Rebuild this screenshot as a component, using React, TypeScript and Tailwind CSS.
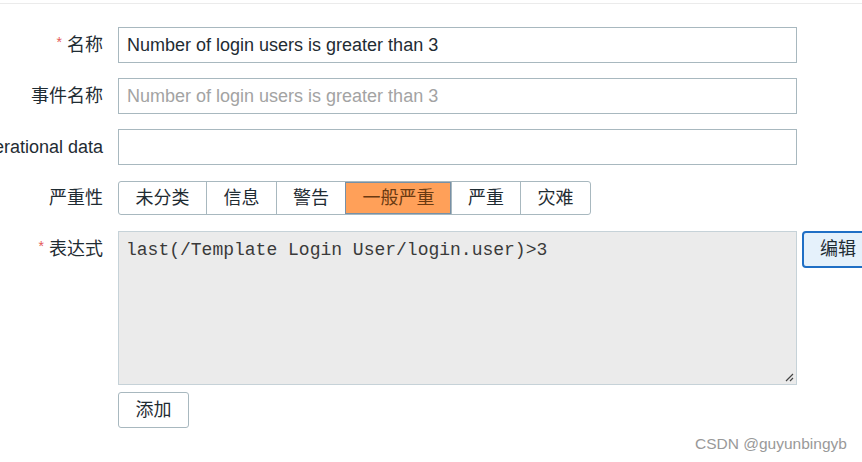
import React from 'react';

const levels = [
  { name: '未分类', w: 'w-[87px]' },
  { name: '信息', w: 'w-[70px]' },
  { name: '警告', w: 'w-[69px]' },
  { name: '一般严重', w: 'w-[106px]', active: true },
  { name: '严重', w: 'w-[69px]' },
  { name: '灾难', w: 'w-[70px]' },
];

function Label({ text, required }: { text: string; required?: boolean }) {
  return (
    <div className="w-[103px] shrink-0 flex justify-end items-center h-[36px] whitespace-nowrap text-[18px] text-[#1f2c33]">
      {required && <span className="text-[#e45959] text-[14px] mr-[5px] -mt-[5px]">*</span>}
      <span>{text}</span>
    </div>
  );
}

export default function App() {
  return (
    <div
      className="w-[862px] h-[462px] bg-white relative overflow-hidden"
      style={{ fontFamily: '"Liberation Sans", "Noto Sans CJK SC", sans-serif' }}
    >
      <div className="pt-[3px]">
        <div className="h-px bg-[#ebebeb]" />
      </div>

      <div className="pt-[23px] flex flex-col">
        <div className="flex items-start">
          <Label text="名称" required />
          <div className="ml-[15px] w-[679px] shrink-0 h-[36px] border border-[#a8b8bf] flex items-center px-[8px] text-[18px] text-[#1f2c33]">
            Number of login users is greater than 3
          </div>
        </div>

        <div className="flex items-start mt-[15px]">
          <Label text="事件名称" />
          <div className="ml-[15px] w-[679px] shrink-0 h-[36px] border border-[#a8b8bf] flex items-center px-[8px] text-[18px] text-[#a3a3a3]">
            Number of login users is greater than 3
          </div>
        </div>

        <div className="flex items-start mt-[15px]">
          <Label text="Operational data" />
          <div className="ml-[15px] w-[679px] shrink-0 h-[36px] border border-[#a8b8bf]" />
        </div>

        <div className="flex items-start mt-[16px]">
          <div className="w-[103px] shrink-0 flex justify-end items-center h-[34px] text-[18px] text-[#1f2c33]">严重性</div>
          <div className="ml-[15px] flex h-[34px] border border-[#a8b8bf] rounded-[3px] overflow-hidden">
            {levels.map((l, i) => (
              <div
                key={l.name}
                className={`${l.w} flex items-center justify-center text-[18px] ${
                  i > 0 ? 'border-l border-[#a8b8bf]' : ''
                } ${l.active ? 'bg-[#ffa059] text-[#6a3a12] outline outline-1 -outline-offset-1 outline-[#7790a6]' : 'text-[#1f2c33]'}`}
              >
                {l.name}
              </div>
            ))}
          </div>
        </div>

        <div className="flex items-start mt-[16px]">
          <Label text="表达式" required />
          <div className="ml-[15px] w-[679px] shrink-0 h-[154px] border border-[#c6d2d8] bg-[#ebebeb] relative px-[7px] pt-[5px]">
            <span
              className="text-[18px] text-[#3a3a3a]"
              style={{ fontFamily: '"Liberation Mono", monospace' }}
            >
              last(/Template Login User/login.user)&gt;3
            </span>
            <svg className="absolute right-[2px] bottom-[2px]" width="10" height="10" viewBox="0 0 10 10">
              <path d="M9 2 L2 9 M9 6 L6 9" stroke="#444" strokeWidth="1.2" />
            </svg>
          </div>
          <div className="ml-[5px] w-[66px] h-[37px] shrink-0 rounded-[4px] border-2 border-[#1f6fc5] bg-[#e5f1fb] flex items-center pl-[16px] text-[18px] text-[#1f2c33]">
            编辑
          </div>
        </div>

        <div className="flex mt-[7px]">
          <div className="w-[103px] shrink-0" />
          <div className="ml-[15px] w-[71px] h-[36px] rounded-[3px] border border-[#a8b8bf] flex items-center justify-center text-[18px] text-[#1f2c33]">
            添加
          </div>
        </div>
      </div>

      <div className="absolute left-[695px] top-[432px] text-[15.5px] text-[#999]">CSDN @guyunbingyb</div>
    </div>
  );
}
